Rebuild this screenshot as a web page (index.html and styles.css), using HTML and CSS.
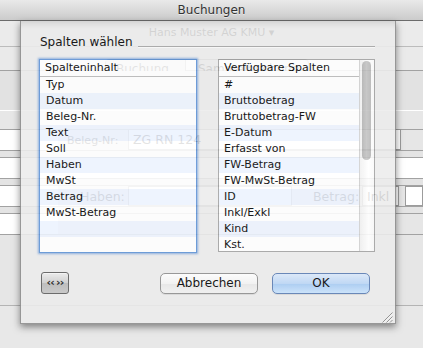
FILE: index.html
```html
<!DOCTYPE html>
<html lang="de">
<head>
<meta charset="utf-8">
<title>Buchungen</title>
<link rel="stylesheet" href="styles.css">
</head>
<body>
<div class="window">
  <div class="titlebar">Buchungen</div>
  <div class="form">
    <div class="row row-a"><span class="ghost">Hans Muster AG KMU ▾</span></div>
    <div class="row row-b">
      <div class="seg"><span class="seg-on">Buchung</span><span class="seg-off">Sammelbuchung</span></div>
    </div>
    <div class="row row-c"></div>
    <div class="row row-d"></div>
    <div class="row row-e">
      <div class="f-left"></div>
      <span class="ghost lbl-beleg">Beleg-Nr:</span>
      <div class="fld fld-beleg"><span class="ghost big">ZG RN 124</span></div>
    </div>
    <div class="row row-gap"></div>
    <div class="row row-g"></div>
    <div class="row row-gap"></div>
    <div class="row row-i">
      <div class="f-left"></div>
      <span class="ghost big lbl-haben">Haben:</span>
      <div class="fld fld-haben"></div>
      <span class="ghost big lbl-betrag">Betrag:</span>
      <div class="fld fld-inkl"><span class="ghost big">Inkl</span></div>
      <div class="fld fld-right"></div>
    </div>
    <div class="row row-gap"></div>
    <div class="row row-k"><div class="f-left"></div></div>
    <div class="row row-l"></div>
    <div class="row row-m"></div>
  </div>

  <div class="sheet">
    <div class="group-title"><span class="group-label">Spalten wählen</span><span class="group-rule"></span></div>
    <div class="lists">
      <div class="list list-focus">
        <div class="list-head">Spalteninhalt</div>
        <div class="item">Typ</div>
        <div class="item alt">Datum</div>
        <div class="item">Beleg-Nr.</div>
        <div class="item alt">Text</div>
        <div class="item">Soll</div>
        <div class="item alt">Haben</div>
        <div class="item">MwSt</div>
        <div class="item alt">Betrag</div>
        <div class="item">MwSt-Betrag</div>
        <div class="item alt"></div>
      </div>
      <div class="list list-avail">
        <div class="list-body">
          <div class="list-head">Verfügbare Spalten</div>
          <div class="item">#</div>
          <div class="item alt">Bruttobetrag</div>
          <div class="item">Bruttobetrag-FW</div>
          <div class="item alt">E-Datum</div>
          <div class="item">Erfasst von</div>
          <div class="item alt">FW-Betrag</div>
          <div class="item">FW-MwSt-Betrag</div>
          <div class="item alt">ID</div>
          <div class="item">Inkl/Exkl</div>
          <div class="item alt">Kind</div>
          <div class="item">Kst.</div>
        </div>
        <div class="scrollbar"><div class="thumb"></div></div>
      </div>
    </div>
    <div class="buttons">
      <button class="btn-small">‹‹ ››</button>
      <span class="spacer"></span>
      <button class="btn">Abbrechen</button>
      <button class="btn btn-default">OK</button>
    </div>
    <svg class="grip" width="11" height="11" viewBox="0 0 11 11">
      <path d="M10.5 0.5 L0.5 10.5 M10.5 4.5 L4.5 10.5 M10.5 8 L8 10.5" stroke="#8a8a8a" stroke-width="1" fill="none"/>
      <path d="M10.5 1.8 L1.8 10.5 M10.5 5.8 L5.8 10.5" stroke="#ffffff" stroke-width="0.8" fill="none" opacity="0.8"/>
    </svg>
  </div>
</div>
</body>
</html>
```

FILE: styles.css
```css
html, body {
  margin: 0;
  padding: 0;
}
body {
  background: #e8e8e8;
  font-family: "DejaVu Sans", "Noto Sans", sans-serif;
  color: #000;
}
.window {
  width: 423px;
  height: 348px;
  position: relative;
  overflow: hidden;
  background: #e8e8e8;
}
.titlebar {
  height: 20px;
  border-bottom: 1px solid #6c6c6c;
  background: linear-gradient(#e9e9e9, #cbcbcb);
  text-align: center;
  font-size: 12px;
  line-height: 21px;
  color: #333333;
  text-shadow: 0 1px 0 rgba(255, 255, 255, 0.55);
}

/* underlying window content */
.form {
  display: flex;
  flex-direction: column;
}
.row {
  display: flex;
  align-items: center;
  box-sizing: border-box;
  flex: none;
  border-bottom: 1px solid #a2a2a2;
  background: #e6e6e6;
}
.ghost {
  color: #000;
  font-size: 11px;
  white-space: nowrap;
}
.ghost.big {
  font-size: 12.5px;
}
.row-a {
  height: 26px;
  background: #ebebeb;
  border-bottom-color: #bcbcbc;
  justify-content: center;
}
.row-a .ghost {
  margin-top: -2px;
}
.row-b {
  height: 24px;
  background: #eaeaea;
  align-items: flex-start;
  padding: 12px 0 0 105px;
}
.seg {
  display: flex;
  height: 19px;
  border: 1px solid #8a8a8a;
  border-radius: 4px;
  font-size: 12px;
  line-height: 19px;
  color: #000;
}
.seg-on {
  width: 80px;
  padding-left: 10px;
  box-sizing: border-box;
  border-right: 1px solid #8a8a8a;
  background: #d6d6d6;
}
.seg-off {
  width: 122px;
  padding-left: 12px;
  box-sizing: border-box;
}
.row-c {
  height: 40px;
  background: #e2e2e2;
  border-bottom-color: #ffffff;
}
.row-d {
  height: 19px;
  background: #e7e7e7;
}
.row-e,
.row-g,
.row-i,
.row-k {
  height: 21px;
  align-items: stretch;
}
.row-gap {
  height: 7px;
  background: #e4e4e4;
}
.row-g {
  background: #ffffff;
}
.row-l {
  height: 71px;
  background: #e6e6e6;
  border-bottom-color: #b4b4b4;
}
.row-m {
  flex: 1;
  height: 43px;
  background: #e8e8e8;
  border-bottom: none;
}
.f-left {
  width: 58px;
  background: #ffffff;
}
.fld {
  background: #ffffff;
  border: 1px solid #9c9c9c;
  box-sizing: border-box;
  display: flex;
  align-items: center;
  padding-left: 4px;
}
.lbl-beleg {
  align-self: center;
  margin-left: 9px;
  width: 61px;
}
.fld-beleg {
  width: 273px;
  margin-top: -1px;
}
.lbl-haben {
  align-self: center;
  margin-left: 22px;
  width: 48px;
}
.fld-haben {
  width: 164px;
}
.lbl-betrag {
  align-self: center;
  margin-left: 21px;
  width: 49px;
}
.fld-inkl {
  width: 37px;
  margin-left: 0;
}
.fld-right {
  width: 20px;
  margin-left: 6px;
  flex: 1;
}

/* sheet */
.sheet {
  position: absolute;
  left: 20px;
  top: 21px;
  width: 376px;
  height: 303px;
  box-sizing: border-box;
  border-left: 1px solid #8c8c8c;
  border-right: 1px solid #8c8c8c;
  border-bottom: 1px solid #8e8e8e;
  background: #ececec;
  box-shadow: 0 3px 7px rgba(0, 0, 0, 0.5), inset 0 9px 8px -8px rgba(0, 0, 0, 0.18);
  opacity: 0.89;
  display: flex;
  flex-direction: column;
  padding: 0 20px 0 18px;
}
.group-title {
  display: flex;
  align-items: flex-start;
  margin-top: 13px;
  height: 16px;
  font-size: 12px;
  line-height: 16px;
}
.group-label {
  margin-left: 1px;
  white-space: nowrap;
}
.group-rule {
  flex: 1;
  margin: 12px 0 0 5px;
  border-top: 1px solid #a9a9a9;
  border-bottom: 1px solid #f8f8f8;
}
.lists {
  display: grid;
  grid-template-columns: 158px 157px;
  column-gap: 21px;
  align-items: start;
  margin-top: 9px;
}
.list {
  background: #ffffff;
  box-sizing: border-box;
  overflow: hidden;
  font-size: 11px;
  line-height: 16px;
}
.list-focus {
  height: 194px;
  border: 1px solid #5f93d6;
  box-shadow: 0 0 2px 1px rgba(96, 146, 214, 0.75);
}
.list-avail {
  height: 193px;
  border: 1px solid #a3a3a3;
  display: flex;
}
.list-body {
  flex: 1;
  min-width: 0;
}
.list-head {
  height: 16px;
  border-bottom: 1px solid #b9b9b9;
  padding-left: 5px;
  white-space: nowrap;
}
.item {
  height: 16px;
  padding-left: 6px;
  white-space: nowrap;
}
.list-avail .item,
.list-avail .list-head {
  padding-left: 5px;
}
.item.alt {
  background: #edf3fe;
}
.scrollbar {
  width: 14px;
  border-left: 1px solid #d2d2d2;
  background: linear-gradient(90deg, #f1f1f1, #ffffff 60%, #fafafa);
  flex: none;
}
.thumb {
  width: 9px;
  height: 99px;
  margin: 1px 0 0 2px;
  border-radius: 5px;
  background: linear-gradient(90deg, #b4b4b4, #c4c4c4 50%, #b8b8b8);
}
.buttons {
  display: flex;
  align-items: center;
  margin-top: 19px;
  height: 22px;
}
.btn-small {
  width: 28px;
  height: 22px;
  margin-left: 2px;
  padding: 0 0 1px;
  border: 1px solid #5e5e5e;
  border-radius: 3px;
  background: linear-gradient(#ededed, #cdcdcd 50%, #b9b9b9 51%, #c6c6c6);
  font-family: "DejaVu Sans", sans-serif;
  font-size: 11px;
  line-height: 18px;
  font-weight: bold;
  letter-spacing: -0.8px;
  word-spacing: -1px;
  text-align: center;
  color: #111;
  box-shadow: inset 0 1px 0 rgba(255, 255, 255, 0.5);
  white-space: nowrap;
  overflow: hidden;
}
.spacer {
  flex: 1;
}
.btn {
  width: 98px;
  height: 21px;
  padding: 0;
  margin-top: 1px;
  border: 1px solid #8f8f8f;
  border-radius: 5px;
  background: linear-gradient(#ffffff, #f4f4f4 50%, #e8e8e8 51%, #f2f2f2);
  font-family: "DejaVu Sans", sans-serif;
  font-size: 12px;
  line-height: 19px;
  color: #000;
  box-shadow: 0 1px 0 rgba(0, 0, 0, 0.08);
}
.btn + .btn {
  margin-left: 14px;
}
.btn-default {
  margin-right: 5px;
  border-color: #5b7db3;
  background: linear-gradient(#dbe9fb, #bcd7f6 50%, #a6cbf3 51%, #c9e3fd);
}
.grip {
  display: block;
  align-self: flex-end;
  margin-top: auto;
  margin-right: -18px;
  margin-bottom: 0;
}
```
